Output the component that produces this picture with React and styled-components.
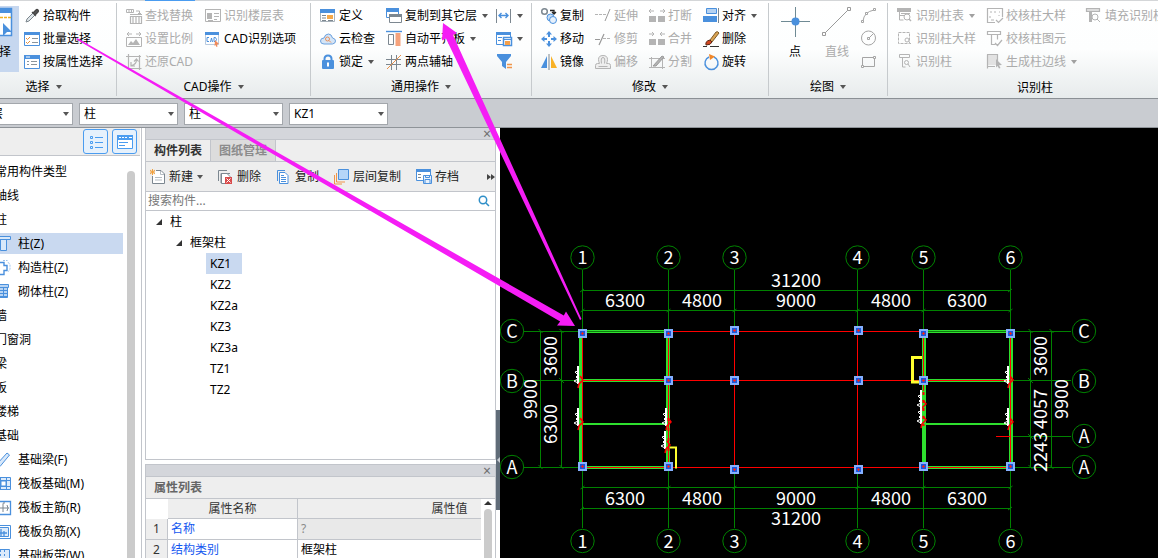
import { Fragment } from "react";
import styled, { createGlobalStyle } from "styled-components";

const BLUE = "#4a90dd";
const GREY = "#b4b4b4";
const STEEL = "#7c8790";

// ICONOS 16x16
const icons = {
  picker: (
    <>
      <path d="M2 14l1-3 6-6 2 2-6 6-3 1z" fill="#dfe6ea" stroke="#7b858c" />
      <path d="M8 4l4 4M9 5l3-3q1-1 2 0t0 2l-3 3z" stroke="#444" fill="#555" strokeWidth="1.3" />
    </>
  ),
  batch: (
    <>
      <path d="M.5 1.5h15v13H.5z" fill="#fff" stroke={BLUE} />
      <path d="M0 1h16v3H0z" fill={BLUE} />
      <path d="M2 7l1.500 1.500L6 6M2 11l1.500 1.500L6 10" stroke="#e8903a" />
      <path d="M8 7.500h6M8 11.500h6" stroke="#8a949c" />
    </>
  ),
  attribute: (
    <>
      <path d="M.5 1.5h15v13H.5z" fill="#fff" stroke={BLUE} />
      <path d="M0 1h16v4H0z" fill={BLUE} />
      <path d="M2 3h4" stroke="#fff" />
      <path d="M3 7.500h2M7 7.500h6M3 10.500h2M7 10.500h6" stroke="#8a949c" />
    </>
  ),
  find: (
    <>
      <path d="M.5 1.500h7v3h-7zM3 1.500v3M5.500 1.500v3M10 3h3.500v3M12 5l1.500 1.500L15 5" stroke={GREY} />
      <path d="M4.500 8.500h11v7h-11zM4 6.500h12M7 9v6M10 9v6M13 9v6" stroke={GREY} strokeWidth="1.2" />
    </>
  ),
  scale: (
    <>
      <path d="M1 3h5M3 1L1 3l2 2M10 3h5M13 1l2 2-2 2M.5 6.500h15v9H.5z" stroke={GREY} />
      <path d="M2 14l3-4 2 2 3-4 4 6z" fill={GREY} />
    </>
  ),
  restore: (
    <path d="M0 2.500h15M2.500 0v14.500h13M13.500 1v15M5 8v4h4M5.500 11.500q5-1 5-6M8 7.500l2.500-2.500 2 2.500" stroke={GREY} strokeWidth="1.2" />
  ),
  floors: (
    <>
      <path d="M.5 1.500h15v12H.5z" stroke={GREY} />
      <path d="M2 5h5v6H2z" fill={GREY} />
      <path d="M0 1.500h16M9 5.500h5M9 8.500h5M9 11.500h3M3 12.500h5" stroke={GREY} />
    </>
  ),
  cadOption: (
    <>
      <path d="M.5 2.500h13v11H.5z" fill="#fff" stroke="#b9cbe0" />
      <path d="M0 1h14v3H0z" fill={BLUE} />
      <path d="M4 6.500H2v4h2M5.500 11l1-4 1 4M9 6.500v4h1.500l1-2-1-2z" stroke={BLUE} />
      <path d="M10 9l4 4-2 .5.5 2-1 .5-1-2-1 1z" fill="#f08a5a" />
    </>
  ),
  define: (
    <>
      <path d="M.5 1.500h14v12H.5z" fill="#fff" stroke="#a9b3bb" />
      <path d="M0 1h15v4H0z" fill={BLUE} />
      <path d="M2 7.500h4M2 10h4M2 12.500h4M8 12.500h5" stroke={STEEL} />
      <path d="M7 7h6v4H7z" fill="#f5a94a" />
    </>
  ),
  cloud: (
    <>
      <path d="M4 13q-3.500 0-3.500-3T4 7q1-4 4.500-4 3 0 4 4 3 .5 3 3t-3 3z" fill="#d5e5f6" stroke="#6ba1de" />
      <circle cx="7.500" cy="8" r="2" stroke="#e8905a" />
      <path d="M9 9.500l2 2" stroke="#e8905a" />
    </>
  ),
  lock: (
    <>
      <path d="M4.500 7V5q0-3.500 3.500-3.500T11.500 5v2" stroke={BLUE} strokeWidth="2" />
      <rect x="2" y="6" width="12" height="9" rx="1" fill={BLUE} />
      <path d="M8 8.500v4" stroke="#fff" strokeWidth="2" />
    </>
  ),
  copyFloor: (
    <>
      <path d="M.5.500h12v9H.5z" fill="#fff" stroke={BLUE} />
      <path d="M0 0h13v4H0z" fill={BLUE} />
      <path d="M3.500 6.500h12v8h-12z" fill="#fff" stroke={STEEL} />
      <path d="M3 6h13v3H3z" fill={STEEL} />
    </>
  ),
  autoBoard: (
    <>
      <path d="M0 .5h16" stroke={BLUE} strokeWidth="1.400" />
      <path d="M2.500 3.500h5v10h-5z" stroke={STEEL} />
      <path d="M9.500 2h5v13h-5z" fill="#f5a27c" />
    </>
  ),
  axis: (
    <>
      <path d="M0 5.500h15M0 10.500h15M5.500 1v15M10.500 1v15" stroke={STEEL} />
      <path d="M1 15L15 1" stroke="#e8904a" />
    </>
  ),
  dimension: (
    <>
      <path d="M.5 1v14M14.500 1v14" stroke={STEEL} />
      <path d="M3 7.500h9M5.500 5L3 7.500 5.500 10M9.500 5L12 7.500 9.500 10" stroke={BLUE} strokeWidth="1.400" />
    </>
  ),
  saveView: (
    <>
      <path d="M.5 1.500h14v12H.5z" fill="#fff" stroke={BLUE} />
      <path d="M0 1h15v3H0z" fill={BLUE} />
      <path d="M2 6.500h4M2 9.500h3" stroke={BLUE} />
      <path d="M7.500 6.500h8v8h-8z" fill="#fff" stroke={BLUE} strokeWidth="1.500" />
      <path d="M8 8.500h7" stroke={BLUE} />
      <path d="M9 10h5v4H9z" fill="#f5a04a" />
    </>
  ),
  funnel: (
    <>
      <path d="M1 0h14v2l-5 6v7l-4-3V8L1 2z" fill={BLUE} />
      <path d="M11 10.500h5M11 13.500h5" stroke="#f0954a" strokeWidth="1.300" />
    </>
  ),
  copy: (
    <>
      <circle cx="3.500" cy="3.500" r="2.800" stroke={STEEL} strokeWidth="1.500" />
      <path d="M9 2.500h4V5M11 4l2 2 2-2" stroke="#222" strokeWidth="1.300" />
      <circle cx="9.500" cy="9.500" r="3.500" fill="#c8def5" stroke={BLUE} />
      <circle cx="12" cy="12" r="3.500" fill="#e6f0fb" stroke={BLUE} />
    </>
  ),
  move: (
    <path d="M8 0l3 3.500H9V6H7V3.500H5zM8 16l-3-3.500h2V10h2v2.500h2zM0 8l3.500-3v2H6v2H3.500v2zM16 8l-3.500 3V9H10V7h2.500V5z" fill={BLUE} />
  ),
  mirror: (
    <>
      <path d="M6 2v12H0z" fill={BLUE} />
      <path d="M10 2v12h6z" fill="#f8b125" />
      <path d="M8 0v16" stroke={STEEL} />
    </>
  ),
  extend: (
    <>
      <path d="M0 6.500h11" stroke={GREY} strokeDasharray="3 1" />
      <path d="M10 13l5-12" stroke="#999" />
    </>
  ),
  trim: (
    <>
      <path d="M0 8.500h5M4 14L9 3" stroke="#999" strokeWidth="1.200" />
      <path d="M8 7.500h8" stroke={GREY} strokeDasharray="3 1" />
    </>
  ),
  offset: (
    <path d="M.5 14.500v-3q0-2 2-2h2q-1-2-1-4 0-4 4.500-4t4.500 4q0 2-1 4h2q2 0 2 2v3zM3.500 12.500h9M6.500 9.500q-1-6 1.500-6t1.500 6" fill="#eee" stroke={GREY} />
  ),
  breakUp: (
    <>
      <path d="M0 8h7v6H0zM9 8h7v6H9z" fill={GREY} />
      <path d="M0 3h5M2 1L0 3l2 2M11 3h5M14 1l2 2-2 2" stroke={GREY} />
    </>
  ),
  merge: (
    <>
      <path d="M0 8h7v6H0zM9 8h7v6H9z" fill={GREY} />
      <path d="M0 3h5M3 1l2 2-2 2M11 3h5M13 1l-2 2 2 2" stroke={GREY} />
    </>
  ),
  split: (
    <>
      <path d="M0 4.500h16M2.500 3v10M13.500 5v10M0 13.500h16" stroke={GREY} />
      <path d="M4 12L13 2l2 1-8 9z" fill={GREY} stroke="#999" />
    </>
  ),
  align: (
    <>
      <path d="M3.500.500h10v5h-10z" fill="#b5d2f2" stroke={BLUE} />
      <path d="M0 8h14v6H0z" fill={BLUE} />
      <path d="M15.500 0v15" stroke={STEEL} />
    </>
  ),
  erase: (
    <>
      <path d="M7 9l6-8q2-1 3 1L9 11z" fill="#d9a352" stroke="#7c5a2a" />
      <path d="M3 14q-1-4 4-5l2 2q-1 3-6 3z" fill="#d2451e" stroke="#5a2a18" />
      <path d="M0 15.500h4M7 15.500h9" stroke="#333" />
    </>
  ),
  rotate: (
    <>
      <path d="M6 3a6.500 6.500 0 1 0 5 0" stroke={BLUE} strokeWidth="1.400" />
      <path d="M6 0l6 2.500L7 6z" fill="#f0872a" />
    </>
  ),
  arc: (
    <>
      <path d="M2 13Q3 4 13 2" stroke="#a4a4a4" />
      <path d="M.5 12.500h2v2h-2zM4.500 4.500h2v2h-2zM12.500.500h2v2h-2z" fill="#fff" stroke="#a4a4a4" />
    </>
  ),
  circle: (
    <>
      <circle cx="7.500" cy="7" r="7" stroke="#a4a4a4" />
      <path d="M8 7l4-4M6.500 6.500h2v2h-2z" stroke="#a4a4a4" />
    </>
  ),
  rect: (
    <>
      <path d="M1.500 3.500h12v9h-12z" stroke="#a4a4a4" />
      <path d="M.5 11.500h2v2h-2zM12.500 2.500h2v2h-2z" fill="#fff" stroke="#a4a4a4" />
    </>
  ),
  colTable: (
    <>
      <path d="M0 0h14v4H0z" fill={GREY} />
      <path d="M2.500 4v8h4M2 7.500h5M4 5.500h9" stroke={GREY} />
      <circle cx="10" cy="9" r="3" stroke={GREY} />
      <path d="M12 11l2 2" stroke={GREY} strokeWidth="1.500" />
    </>
  ),
  colDetail: (
    <>
      <path d="M1.500 1.500h11v11h-11z" stroke={GREY} strokeDasharray="3 1" />
      <circle cx="10" cy="9" r="2" stroke={GREY} />
      <path d="M11.500 10.500l2.500 2.500" stroke={GREY} />
    </>
  ),
  column: (
    <>
      <path d="M2.500.500h10v3h-10zM5.500 3.500v9.500h3" stroke={GREY} />
      <circle cx="9.500" cy="8.500" r="2" stroke={GREY} />
      <path d="M11 10l2 3" stroke={GREY} />
    </>
  ),
  checkDetail: (
    <>
      <path d="M8 14.500H.5V.5h15V9" stroke={GREY} strokeWidth="1.200" />
      <path d="M3 4h2M7 4h2M12 4h1M3 8v2M12 7v1M4 12h3" stroke={GREY} />
      <path d="M9 12l2.500 2.500L16 10" stroke={GREY} strokeWidth="1.200" />
    </>
  ),
  checkColumn: (
    <path d="M.5.500h13v3H.5zM4.500 3.500v10h4M10.500 3.500v5M8 12l2.500 2.500L15 9" stroke={GREY} strokeWidth="1.200" />
  ),
  edge: (
    <>
      <path d="M1 1h9v10H1z" fill="#e2e2e2" />
      <path d="M.5.500v14M0 .5h10.500V7M0 12.500h8" stroke={GREY} strokeWidth="1.200" />
      <path d="M9 5l6 6-3 .3 1.500 2.700-1.500.6L10.500 12 9 13.500z" fill={GREY} />
    </>
  ),
  fill: (
    <>
      <path d="M.5.500h13v3H.5z" fill="#ddd" stroke={GREY} strokeWidth="1.200" />
      <path d="M3 4h3v10H3z" fill={GREY} />
      <circle cx="9" cy="9" r="3" stroke={GREY} />
      <path d="M11 11l3 3" stroke={GREY} />
    </>
  ),
  create: (
    <>
      <path d="M6 1.500h5l3.500 3.500v9.500h-12V7" fill="#fff" stroke={STEEL} />
      <path d="M10.500 2v3.500H14M5 8.500h7M5 11h7" stroke="#b5bcc2" />
      <path d="M0 1l5 4M5 1L0 5M2.500 0v6M0 3h5" stroke="#f2a03c" />
    </>
  ),
  remove: (
    <>
      <path d="M.5 12V1.500H9M3 14V4.500h9" stroke={STEEL} />
      <path d="M3.500 4.500H9l3 3v7H3.500z" fill="#fff" stroke={STEEL} />
      <path d="M7 8h7v7H7z" fill="#d94b4b" />
      <path d="M8.500 9.500l4 4M12.500 9.500l-4 4" stroke="#fff" />
    </>
  ),
  pages: (
    <>
      <path d="M1.500 12V1.500H9" stroke={BLUE} />
      <path d="M3.500 3.500H9l3 3v8H3.500z" fill="#fff" stroke={BLUE} />
      <path d="M5 6.500h3M5 8.500h5M5 10.500h5M5 12.500h5" stroke={BLUE} />
    </>
  ),
  layerCopy: (
    <>
      <path d="M.5 6v9H8M2.500 4v9H11" stroke="#f0954a" />
      <path d="M4.500.500h10v10h-10z" fill="#b5d5f8" stroke={BLUE} />
    </>
  ),
  archive: (
    <>
      <path d="M.5.500h14v11H.5z" fill="#fff" stroke={BLUE} />
      <path d="M0 0h15v3H0z" fill={BLUE} />
      <path d="M2 5.500h3M2 8.500h3" stroke={STEEL} />
      <path d="M7.500 6.500h8v8h-8z" fill="#e7f1fc" stroke={BLUE} />
      <path d="M9 14v-3.500h5V14M9.500 7v1.500h4V7" stroke={BLUE} />
    </>
  ),
  typeColumn: (
    <path d="M1.500.500h14v3h-14zM5.500 3.500h6v11h-6z" fill="#d8e8fa" stroke={BLUE} />
  ),
  typeTie: (
    <>
      <path d="M8 .5h4q1 0 1 2 2 1 2 3v3q0 2-2 3" stroke="#9cc3ee" strokeDasharray="2 1" />
      <path d="M4 2.500h5v3h3v5H9v4H4v-3.500H2v-5h2z" fill="#fff" stroke={BLUE} strokeWidth="1.400" />
    </>
  ),
  typeBrick: (
    <>
      <path d="M1.500.500h12v3h-12zM4.500 3.500h8v10h-8z" fill="#b8d4f3" stroke={BLUE} />
      <path d="M5 6.500h7M5 9.500h7M5 12.500h7M8.500 4v10" stroke={BLUE} />
    </>
  ),
  typeBeam: <path d="M2 12L12 1l2.500 2L5 14.500H2z" fill="#d8e8fa" stroke={BLUE} />,
  typeRaft: (
    <>
      <path d="M.5 1.500h15v12H.5zM.5 4.500h15M.5 10.500h15M5.500 1v13M11.500 1v13" fill="#dcebfb" stroke={BLUE} />
      <path d="M6 5h5v5H6z" fill="#fff" stroke={BLUE} />
    </>
  ),
  typeMain: (
    <>
      <path d="M.5 1.500h15v13H.5z" fill="#fff" stroke={BLUE} strokeWidth="1.300" />
      <path d="M2 8h12M12 5q2 3 0 6M8 12V4q0-2 2-1" stroke={STEEL} />
    </>
  ),
  typeNeg: (
    <>
      <path d="M1 1.500h14.500v13H1z" fill="#fff" stroke={BLUE} />
      <path d="M1 3.500h12.500v9H1z" fill="#dcebfb" stroke={BLUE} />
      <path d="M3 9h9M6 5v7M9 7v5" stroke={BLUE} strokeWidth="1.300" />
    </>
  ),
  typeBand: (
    <>
      <path d="M.5 1.500h14v13H.5z" fill="#dcebfb" stroke={BLUE} />
      <path d="M5.500 2v12M9.500 2v12" stroke={BLUE} strokeDasharray="2 2" />
    </>
  ),
};

const IconSvg = styled.svg`
  flex: none;
  width: 16px;
  height: 16px;
  fill: none;
  overflow: visible;
`;

const Icon = ({ name }) => (
  <IconSvg viewBox="0 0 16 16" aria-hidden="true">
    {icons[name]}
  </IconSvg>
);

// BOTONES DE LA CINTA
const ribbon = [
  {
    title: "选择",
    width: 146,
    columns: [
      {
        width: 92,
        items: [
          { icon: "picker", text: "拾取构件" },
          { icon: "batch", text: "批量选择" },
          { icon: "attribute", text: "按属性选择" },
        ],
      },
    ],
  },
  {
    title: "CAD操作",
    width: 194,
    columns: [
      {
        width: 79,
        items: [
          { icon: "find", text: "查找替换", off: true },
          { icon: "scale", text: "设置比例", off: true },
          { icon: "restore", text: "还原CAD", off: true },
        ],
      },
      {
        width: 96,
        items: [
          { icon: "floors", text: "识别楼层表", off: true },
          { icon: "cadOption", text: "CAD识别选项" },
        ],
      },
    ],
  },
  {
    title: "通用操作",
    width: 221,
    columns: [
      {
        width: 66,
        items: [
          { icon: "define", text: "定义" },
          { icon: "cloud", text: "云检查" },
          { icon: "lock", text: "锁定", arrow: true },
        ],
      },
      {
        width: 110,
        items: [
          { icon: "copyFloor", text: "复制到其它层", arrow: true },
          { icon: "autoBoard", text: "自动平齐板", arrow: true },
          { icon: "axis", text: "两点辅轴" },
        ],
      },
      {
        width: 28,
        items: [
          { icon: "dimension", label: "标注", arrow: true },
          { icon: "saveView", label: "保存", arrow: true },
          { icon: "funnel", label: "过滤" },
        ],
      },
    ],
  },
  {
    title: "修改",
    width: 237,
    columns: [
      {
        width: 54,
        items: [
          { icon: "copy", text: "复制" },
          { icon: "move", text: "移动" },
          { icon: "mirror", text: "镜像" },
        ],
      },
      {
        width: 54,
        items: [
          { icon: "extend", text: "延伸", off: true },
          { icon: "trim", text: "修剪", off: true },
          { icon: "offset", text: "偏移", off: true },
        ],
      },
      {
        width: 54,
        items: [
          { icon: "breakUp", text: "打断", off: true },
          { icon: "merge", text: "合并", off: true },
          { icon: "split", text: "分割", off: true },
        ],
      },
      {
        width: 60,
        items: [
          { icon: "align", text: "对齐", arrow: true },
          { icon: "erase", text: "删除" },
          { icon: "rotate", text: "旋转" },
        ],
      },
    ],
  },
  {
    title: "绘图",
    width: 119,
    columns: [
      {
        width: 20,
        items: [
          { icon: "arc", label: "弧", off: true },
          { icon: "circle", label: "圆", off: true },
          { icon: "rect", label: "矩形", off: true },
        ],
      },
    ],
  },
  {
    title: "识别柱",
    width: 294,
    plain: true,
    columns: [
      {
        width: 90,
        items: [
          { icon: "colTable", text: "识别柱表", off: true, arrow: true },
          { icon: "colDetail", text: "识别柱大样", off: true },
          { icon: "column", text: "识别柱", off: true },
        ],
      },
      {
        width: 99,
        items: [
          { icon: "checkDetail", text: "校核柱大样", off: true },
          { icon: "checkColumn", text: "校核柱图元", off: true },
          { icon: "edge", text: "生成柱边线", off: true, arrow: true },
        ],
      },
      { width: 90, items: [{ icon: "fill", text: "填充识别柱", off: true }] },
    ],
  },
];

const combos = [
  { label: "楼层", value: "首层" },
  { label: "构件类型", value: "柱" },
  { label: "构件", value: "柱" },
  { label: "构件名称", value: "KZ1" },
];

const types = [
  { text: "常用构件类型" },
  { text: "轴线" },
  { text: "柱" },
  { text: "柱(Z)", icon: "typeColumn", active: true },
  { text: "构造柱(Z)", icon: "typeTie" },
  { text: "砌体柱(Z)", icon: "typeBrick" },
  { text: "墙" },
  { text: "门窗洞" },
  { text: "梁" },
  { text: "板" },
  { text: "楼梯" },
  { text: "基础" },
  { text: "基础梁(F)", icon: "typeBeam" },
  { text: "筏板基础(M)", icon: "typeRaft" },
  { text: "筏板主筋(R)", icon: "typeMain" },
  { text: "筏板负筋(X)", icon: "typeNeg" },
  { text: "基础板带(W)", icon: "typeBand" },
];

const members = ["KZ1", "KZ2", "KZ2a", "KZ3", "KZ3a", "TZ1", "TZ2"];

const tools = [
  { icon: "create", text: "新建", arrow: true },
  { icon: "remove", text: "删除" },
  { icon: "pages", text: "复制" },
  { icon: "layerCopy", text: "层间复制" },
  { icon: "archive", text: "存档" },
];

const Arrow = () => (
  <ArrowSvg viewBox="0 0 6 4" aria-hidden="true">
    <path d="M0 0h6L3 4z" />
  </ArrowSvg>
);

const RibbonGroup = ({ group }) => (
  <Group $width={group.width}>
    <GroupBody>
      {group.title === "选择" && (
        <BigButton $active $width={40}>
          <BigIcon viewBox="0 0 30 30">
            <path d="M2.500 1.500h25v27h-25z" fill="#fff" stroke={BLUE} strokeWidth="1.500" />
            <path d="M2 1h26v5H2z" fill={BLUE} />
            <path d="M4 10.500h23" stroke="#f0b020" strokeWidth="1.500" strokeDasharray="3 1" />
            <path d="M19 16l9 9h-5l-4 4z" fill={BLUE} />
          </BigIcon>
          选择
        </BigButton>
      )}
      {group.title === "绘图" && (
        <>
          <BigButton $width={42}>
            <BigIcon viewBox="0 0 30 30">
              <path d="M15.500 0v30M1 14.500h29" stroke="#6f8a94" />
              <circle cx="15.500" cy="14.500" r="4" fill={BLUE} />
            </BigIcon>
            点
          </BigButton>
          <BigButton $width={42} disabled>
            <BigIcon viewBox="0 0 30 30">
              <path d="M2 27L27 2" stroke="#9a9a9a" />
              <path d="M.5 25.500h3v3h-3zM25.500.500h3v3h-3z" fill="#fff" stroke="#9a9a9a" />
            </BigIcon>
            直线
          </BigButton>
        </>
      )}
      {group.columns.map((column) => (
        <Column key={column.items[0].icon} $width={column.width}>
          {column.items.map((item) => (
            <ToolButton key={item.icon} disabled={item.off} aria-label={item.label}>
              <Icon name={item.icon} />
              {item.text}
              {item.arrow && <Arrow />}
            </ToolButton>
          ))}
        </Column>
      ))}
    </GroupBody>
    <GroupTitle $plain={group.plain}>
      {group.title}
      {!group.plain && <Arrow />}
    </GroupTitle>
  </Group>
);

// PLANO
const axes = [582.5, 668.5, 734.5, 857.5, 923.5, 1010.5];
const spans = [
  [625, "6300"],
  [702, "4800"],
  [796, "9000"],
  [891, "4800"],
  [967, "6300"],
];
const rows = [
  [512, 331, "C"],
  [512, 381, "B"],
  [512, 467, "A"],
  [1084, 331, "C"],
  [1084, 381, "B"],
  [1084, 436, "A"],
  [1084, 467, "A"],
];
const sideDims = [
  [551, 356, "3600"],
  [551, 424, "6300"],
  [531, 399, "9900"],
  [1041, 356, "3600"],
  [1041, 409, "4057"],
  [1041, 452, "2243"],
  [1062, 399, "9900"],
];
const nodes = [
  [582, 333],
  [668, 333],
  [734, 330],
  [858, 330],
  [923, 333],
  [1010, 333],
  [668, 380],
  [734, 380],
  [858, 380],
  [923, 380],
  [582, 466],
  [668, 466],
  [734, 469],
  [858, 469],
  [923, 466],
  [1010, 466],
];
const marks = [
  [578, 366],
  [578, 408],
  [666, 408],
  [665, 431],
  [921, 390],
  [921, 406],
  [1008, 366],
  [1008, 408],
];

const Drawing = () => (
  <Plan viewBox="500 128 658 430" role="img" aria-label="柱平面图">
    <g stroke="#008200">
      {axes.map((x) => (
        <path key={x} d={`M${x} 270V331M${x} 467V528`} />
      ))}
      <path d="M582 290.500h428M582 310.500h428M582 487.500h428M582 508.500h428" />
      <path d="M540.500 331v136M561.500 331v136M1030.500 331v136M1051.500 331v136" />
      <path d="M524 331.500h58M524 380.500h58M524 467.500h58M1010 331.500h61M1010 380.500h61M1010 436.500h61M1010 467.500h61" />
      {axes.map((x) => (
        <path key={x} d={`M${x - 2} 312l4-3M${x - 2} 489l4-3`} />
      ))}
      <path d="M580 292l4-3M580 510l4-3M1008 292l4-3M1008 510l4-3" />
      {[540.5, 561.5, 1030.5, 1051.5].map((x) => (
        <path key={x} d={`M${x - 2} 329l4 4M${x - 2} 465l4 4`} />
      ))}
      <path d="M559 378l5 5M1028 378l5 5M1028 434l5 5" />
      {axes.map((x) => (
        <Fragment key={x}>
          <circle cx={x} cy="257.500" r="11.700" />
          <circle cx={x} cy="541" r="11.700" />
        </Fragment>
      ))}
      {rows.map(([x, y]) => (
        <circle key={`${x}-${y}`} cx={x} cy={y} r="11.700" />
      ))}
    </g>

    <g stroke="#2ee02e">
      <path d="M582 331.500h86M923 331.500h87" stroke="#0d7a0d" />
      <path d="M582 330.500h86M582 332.500h86M923 330.500h87M923 332.500h87" />
      <path d="M582 380.500h86M923 380.500h87M582 467.500h86M923 467.500h87" strokeWidth="3" />
      <path d="M582 424h86M923 424h87" strokeWidth="2" />
      <path d="M580.500 331v136" strokeWidth="3" />
      <path d="M668 331v136M924 331v136M1011 331v136" strokeWidth="4" />
    </g>
    <g stroke="#f00">
      <path d="M668 331.500h256M582 380.500h429M582 467.500h429M996 436.500h14" />
      <path d="M582.500 331v136M668.500 331v136M734.500 331v136M857.500 331v136M923.500 331v60M1010.500 331v136" />
      <path d="M923.500 392v34" strokeWidth="2" strokeDasharray="3 5" />
      <path d="M668.500 418v38" strokeWidth="2" strokeDasharray="3 7" />
    </g>
    <g stroke="#ffff2e" strokeWidth="3">
      <path d="M922 357.500h-9.500v24.500h9" />
      <path d="M670 447.500h6v21" strokeWidth="2" />
    </g>
    {marks.map(([x, y]) => (
      <g key={`${x}-${y}`}>
        <path d={`M${x} ${y}v18`} stroke="#fff" strokeWidth="2" />
        <path d={`M${x} ${y + 5}l-3 1 3 3-2 2 2 2-4 2 4 2`} stroke="#fff" />
        <path d={`M${x + 2} ${y + 10}l3 4-4 4-1 4`} stroke="#f00" strokeWidth="1.500" />
      </g>
    ))}
    {nodes.map(([x, y]) => (
      <g key={`${x}-${y}`}>
        <path d={`M${x - 3} ${y - 3}h7v7h-7z`} fill="#1f56d8" stroke="#85b0ff" strokeWidth="2" />
        <path d={`M${x - 1} ${y + 0.5}h3M${x + 0.5} ${y - 1}v3`} stroke="#e02828" />
      </g>
    ))}

    {axes.map((x, i) => (
      <Fragment key={x}>
        <PlanText x={x} y="264">{i + 1}</PlanText>
        <PlanText x={x} y="548">{i + 1}</PlanText>
      </Fragment>
    ))}
    {rows.map(([x, y, letter]) => (
      <PlanText key={`${x}-${y}`} x={x} y={y + 7}>
        {letter}
      </PlanText>
    ))}
    {spans.map(([x, value]) => (
      <Fragment key={x}>
        <PlanText x={x} y="307">{value}</PlanText>
        <PlanText x={x} y="505">{value}</PlanText>
      </Fragment>
    ))}
    <PlanText x="796" y="287">31200</PlanText>
    <PlanText x="796" y="525">31200</PlanText>
    {sideDims.map(([x, y, value]) => (
      <PlanText key={`${x}-${y}`} transform={`translate(${x + 6} ${y}) rotate(-90)`}>
        {value}
      </PlanText>
    ))}
  </Plan>
);

const App = () => {
  return (
    <>
      <GlobalStyle />
      <Window>
        <TabStrip>
          <TabMark />
        </TabStrip>
        <Ribbon>
          {ribbon.map((group) => (
            <RibbonGroup key={group.title} group={group} />
          ))}
        </Ribbon>

        <ComboBar>
          {combos.map((combo) => (
            <Combo key={combo.label}>
              <select aria-label={combo.label} defaultValue={combo.value}>
                <option>{combo.value}</option>
              </select>
              <Arrow />
            </Combo>
          ))}
        </ComboBar>

        <Main>
          <TypePanel>
            <TypeHeader>
              <ViewButton aria-label="列表">
                <svg viewBox="0 0 18 18">
                  <path d="M3.500 3.500h2v2h-2zM3.500 8.500h2v2h-2zM3.500 13.500h2v2h-2zM8 4.500h8M8 9.500h8M8 14.500h8" stroke="#4a9cf0" fill="none" />
                </svg>
              </ViewButton>
              <ViewButton aria-label="面板">
                <svg viewBox="0 0 18 18">
                  <path d="M1.500 2.500h15v13h-15z" fill="#fff" stroke="#4a9cf0" />
                  <path d="M1 2h16v5H1z" fill="#4a9cf0" />
                  <path d="M3 4.500h2M6 4.500h2M9 4.500h2M13 4.500h3" stroke="#fff" />
                  <path d="M3 9.500h9M3 12.500h6" stroke="#4a9cf0" />
                </svg>
              </ViewButton>
            </TypeHeader>
            <TypeBody>
              <TypeList>
                {types.map((type) => (
                  <TypeRow key={type.text} $active={type.active}>
                    {type.icon && <Icon name={type.icon} />}
                    {type.text}
                  </TypeRow>
                ))}
              </TypeList>
              <TypeScroll />
            </TypeBody>
          </TypePanel>

          <Docks>
            <ListDock>
              <DockTitle>
                <CloseButton aria-label="关闭">×</CloseButton>
              </DockTitle>
              <Tabs>
                <Tab $active>构件列表</Tab>
                <Tab>图纸管理</Tab>
              </Tabs>
              <Toolbar>
                {tools.map((tool) => (
                  <ToolButton key={tool.icon}>
                    <Icon name={tool.icon} />
                    {tool.text}
                    {tool.arrow && <Arrow />}
                  </ToolButton>
                ))}
                <MoreButton aria-label="更多">
                  <svg viewBox="0 0 8 6">
                    <path d="M0 0l4 3-4 3zM4 0l4 3-4 3z" />
                  </svg>
                </MoreButton>
              </Toolbar>
              <Search>
                <input type="text" placeholder="搜索构件..." aria-label="搜索构件" />
                <svg viewBox="0 0 12 12">
                  <circle cx="5" cy="5" r="3.700" />
                  <path d="M8 8l3 3" />
                </svg>
              </Search>
              <Tree>
                <TreeRow $level={0}>
                  <Expand viewBox="0 0 6 6">
                    <path d="M6 0v6H0z" />
                  </Expand>
                  <span>柱</span>
                </TreeRow>
                <TreeRow $level={1}>
                  <Expand viewBox="0 0 6 6">
                    <path d="M6 0v6H0z" />
                  </Expand>
                  <span>框架柱</span>
                </TreeRow>
                {members.map((member, i) => (
                  <TreeRow key={member} $level={2}>
                    <TreeLeaf $active={i === 0}>{member}</TreeLeaf>
                  </TreeRow>
                ))}
              </Tree>
            </ListDock>

            <PropertyDock>
              <DockTitle>
                <CloseButton aria-label="关闭">×</CloseButton>
              </DockTitle>
              <PropertyTitle>属性列表</PropertyTitle>
              <PropertyBody>
                <TableClip>
                  <PropertyTable>
                    <colgroup>
                      <col width="22" />
                      <col width="130" />
                      <col width="304" />
                    </colgroup>
                    <thead>
                      <tr>
                        <td />
                        <th>属性名称</th>
                        <th>属性值</th>
                      </tr>
                    </thead>
                    <tbody>
                      <tr>
                        <IndexCell>1</IndexCell>
                        <NameCell>名称</NameCell>
                        <ValueCell $locked>?</ValueCell>
                      </tr>
                      <tr>
                        <IndexCell>2</IndexCell>
                        <NameCell>结构类别</NameCell>
                        <ValueCell>框架柱</ValueCell>
                      </tr>
                    </tbody>
                  </PropertyTable>
                </TableClip>
                <PropertyScroll>
                  <svg viewBox="0 0 8 4">
                    <path d="M4 0l4 4H0z" />
                  </svg>
                  <span />
                </PropertyScroll>
              </PropertyBody>
            </PropertyDock>
          </Docks>

          <Splitter>
            <SplitHandle aria-label="折叠面板">
              <svg viewBox="0 0 4 6">
                <path d="M4 0v6L1 3z" fill="#c9ced4" />
              </svg>
            </SplitHandle>
          </Splitter>
          <Canvas>
            <Drawing />
          </Canvas>
        </Main>

        <Annotations viewBox="0 0 1158 558" aria-hidden="true">
          <path d="M77 38L563.800 315.500 566 311.500 575 326 557 325.500 560.200 321.500 76.500 39.500z" />
          <path d="M581.500 319L453 35 457 33 443 23 442 40.500 446 38.500 580 320z" />
        </Annotations>
      </Window>
    </>
  );
};

const GlobalStyle = createGlobalStyle`
  * {
    box-sizing: border-box;
  }
  body {
    margin: 0;
    overflow: hidden;
    font-family: "Noto Sans", "Noto Sans CJK SC", sans-serif;
    font-size: 12px;
    line-height: 18px;
    color: #000;
  }
  button, input, select {
    font: inherit;
    color: inherit;
  }
  button {
    border: 0;
    padding: 0;
    background: none;
    white-space: nowrap;
  }
`;

const Window = styled.div`
  position: relative;
  display: flex;
  flex-direction: column;
  height: 100vh;
  overflow: hidden;
`;

// CINTA
const TabStrip = styled.div`
  flex: none;
  height: 1px;
  padding-left: 145px;
  background: #d4d6d8;
`;

const TabMark = styled.div`
  width: 50px;
  height: 1px;
  background: #4a9cf0;
`;

const Ribbon = styled.div`
  flex: none;
  display: flex;
  height: 98px;
  margin-left: -29px;
  border-bottom: 1px solid #8b9095;
  background: linear-gradient(#fff 0%, #fdfefe 50%, #e7ebec 100%);
`;

const Group = styled.section`
  flex: none;
  width: ${(p) => p.$width}px;
  display: flex;
  flex-direction: column;
  margin: 2px 0;
  border-right: 1px solid #c6cacd;
  &:last-child {
    border-right: 0;
  }
`;

const GroupBody = styled.div`
  display: flex;
  height: 71px;
  padding: 1px 0 0 9px;
`;

const GroupTitle = styled.div`
  display: flex;
  align-items: center;
  justify-content: center;
  gap: 4px;
  padding-top: ${(p) => (p.$plain ? "6px" : "4px")};
`;

const Column = styled.div`
  flex: none;
  width: ${(p) => p.$width}px;
  display: flex;
  flex-direction: column;
  align-items: flex-start;
`;

const ArrowSvg = styled.svg`
  flex: none;
  width: 6px;
  height: 4px;
  margin-left: 2px;
  fill: #555;
`;

const ToolButton = styled.button`
  display: flex;
  align-items: center;
  gap: 3px;
  height: 23px;
  &:disabled {
    color: #ababab;
  }
  &:disabled ${ArrowSvg} {
    fill: #a0a0a0;
  }
`;

const BigButton = styled.button`
  flex: none;
  width: ${(p) => p.$width}px;
  height: 66px;
  display: flex;
  flex-direction: column;
  align-items: center;
  gap: 6px;
  margin: ${(p) => (p.$active ? "2px 5px 0 -1px" : "2px 0 0 -4px")};
  background: ${(p) => (p.$active ? "#c6d7ef" : "none")};
  &:disabled {
    color: #ababab;
  }
  & + & {
    margin-left: 0;
    margin-right: 3px;
  }
`;

const BigIcon = styled.svg`
  width: 30px;
  height: 30px;
  margin-top: 1px;
  fill: none;
`;

// BARRA DE SELECTORES
const ComboBar = styled.div`
  flex: none;
  display: flex;
  align-items: center;
  gap: 6px;
  height: 29px;
  padding-top: 1px;
  margin-left: -26px;
  border-bottom: 1px solid #8e9398;
  background: #c9ccd1;
`;

const Combo = styled.div`
  position: relative;
  width: 99px;
  select {
    display: block;
    width: 100%;
    height: 22px;
    padding: 0 4px;
    appearance: none;
    border: 1px solid #a3a7ac;
    border-radius: 0;
    background: #fff;
  }
  ${ArrowSvg} {
    position: absolute;
    right: 4px;
    top: 9px;
  }
`;

const Main = styled.main`
  flex: 1;
  min-height: 0;
  display: flex;
`;

// TIPOS DE COMPONENTE
const TypePanel = styled.aside`
  flex: none;
  width: 142px;
  display: flex;
  flex-direction: column;
  border-right: 1px solid #c2c5cb;
  overflow: hidden;
`;

const TypeHeader = styled.div`
  flex: none;
  display: flex;
  align-items: center;
  justify-content: flex-end;
  gap: 4px;
  height: 28px;
  padding-right: 3px;
  margin-right: 1px;
  border-bottom: 1px solid #c2c5cb;
  background: #eee;
`;

const ViewButton = styled.button`
  width: 25px;
  height: 25px;
  display: grid;
  place-items: center;
  border: 1px solid #4a9cf0;
  border-radius: 3px;
  background: #e6f1fc;
  svg {
    width: 18px;
    height: 18px;
  }
`;

const TypeBody = styled.div`
  flex: 1;
  min-height: 0;
  display: flex;
`;

const TypeList = styled.ul`
  flex: 1;
  min-width: 0;
  display: flex;
  flex-direction: column;
  gap: 3px;
  margin: 0 4px 0 -5px;
  padding: 5px 0 0;
  list-style: none;
`;

const TypeRow = styled.li`
  flex: none;
  display: flex;
  align-items: center;
  gap: 7px;
  height: 21px;
  white-space: nowrap;
  background: ${(p) => (p.$active ? "#c9d9f0" : "none")};
`;

const TypeScroll = styled.div`
  width: 8px;
  margin: 15px 6px 0 0;
  border-radius: 4px 4px 0 0;
  background: #cbcbcb;
`;

// PANELES
const Docks = styled.div`
  flex: none;
  width: 354px;
  display: flex;
  flex-direction: column;
  gap: 4px;
  padding-left: 3px;
`;

const ListDock = styled.section`
  flex: none;
  height: 332px;
  border: 1px solid #c2c5cb;
  border-top: 0;
`;

const DockTitle = styled.div`
  flex: none;
  display: flex;
  justify-content: flex-end;
  height: 12px;
  padding-right: 4px;
  border-bottom: 1px solid #c2c5cb;
  background: #d4d6db;
`;

const CloseButton = styled.button`
  color: #6e6e6e;
  font-size: 14px;
  line-height: 12px;
`;

const Tabs = styled.div`
  display: flex;
  height: 22px;
  border-bottom: 1px solid #c2c5cb;
  background: #eee;
`;

const Tab = styled.button`
  padding: 0 8px;
  border-right: 1px solid #c2c5cb;
  font-weight: 700;
  color: ${(p) => (p.$active ? "#333" : "#8b8b8b")};
  background: ${(p) => (p.$active ? "#eee" : "#dcdcdc")};
`;

const Toolbar = styled.div`
  display: flex;
  align-items: center;
  gap: 15px;
  height: 30px;
  padding-left: 4px;
  border-bottom: 1px solid #c2c5cb;
  background: #eee;
  color: #222;
  ${ArrowSvg} {
    margin-left: 1px;
  }
`;

const MoreButton = styled.button`
  margin-left: auto;
  svg {
    display: block;
    width: 8px;
    height: 6px;
    fill: #444;
  }
`;

const Search = styled.label`
  display: flex;
  align-items: center;
  height: 19px;
  padding: 0 5px 0 2px;
  border-bottom: 1px solid #c2c5cb;
  input {
    flex: 1;
    min-width: 0;
    height: 18px;
    padding: 0;
    border: 0;
    outline: 0;
    background: none;
  }
  input::placeholder {
    color: #777;
    opacity: 1;
  }
  svg {
    width: 12px;
    height: 12px;
    fill: none;
    stroke: #2f8fc8;
    stroke-width: 1.5;
  }
`;

const Tree = styled.ul`
  margin: 0;
  padding: 0;
  list-style: none;
`;

const TreeRow = styled.li`
  display: flex;
  align-items: center;
  gap: 8px;
  height: 21px;
  padding-left: ${(p) => 10 + p.$level * 20}px;
  ${(p) => p.$level === 2 && "padding-left: 60px;"}
`;

const Expand = styled.svg`
  width: 6px;
  height: 6px;
  fill: #333;
`;

const TreeLeaf = styled.span`
  padding: 0 11px 0 4px;
  line-height: 21px;
  background: ${(p) => (p.$active ? "#c9d9f0" : "none")};
`;

const PropertyDock = styled.section`
  flex: 1;
  min-height: 0;
  display: flex;
  flex-direction: column;
  overflow: hidden;
  border: 1px solid #c2c5cb;
  border-bottom: 0;
`;

const PropertyTitle = styled.h2`
  flex: none;
  height: 22px;
  margin: 0;
  padding-left: 8px;
  border-bottom: 1px solid #c2c5cb;
  background: #eee;
  color: #666;
  font-size: 12px;
  font-weight: 700;
  line-height: 21px;
`;

const PropertyBody = styled.div`
  flex: 1;
  min-height: 0;
  display: flex;
`;

const TableClip = styled.div`
  flex: 1;
  min-width: 0;
  overflow: hidden;
`;

const PropertyTable = styled.table`
  width: 456px;
  table-layout: fixed;
  border-collapse: separate;
  border-spacing: 0;
  th {
    height: 20px;
    padding: 0;
    border-right: 1px solid #c2c5cb;
    border-bottom: 1px solid #c2c5cb;
    background: #eee;
    color: #333;
    font-weight: 400;
  }
`;

const Cell = styled.td`
  height: 21px;
  padding: 0 3px;
  border-right: 1px solid #c2c5cb;
  border-bottom: 1px solid #c2c5cb;
`;

const IndexCell = styled(Cell)`
  background: #eee;
  color: #333;
  text-align: center;
`;

const NameCell = styled(Cell)`
  color: #1458f0;
`;

const ValueCell = styled(Cell)`
  background: ${(p) => (p.$locked ? "#e9e9e9" : "#fff")};
  color: ${(p) => (p.$locked ? "#8b8b8b" : "#000")};
`;

const PropertyScroll = styled.div`
  flex: none;
  width: 14px;
  display: flex;
  flex-direction: column;
  align-items: center;
  gap: 4px;
  padding-top: 2px;
  svg {
    flex: none;
    width: 8px;
    height: 4px;
    fill: #333;
  }
  span {
    flex: 1;
    width: 8px;
    border-radius: 4px 4px 0 0;
    background: #cbcbcb;
  }
`;

// LIENZO
const Splitter = styled.div`
  flex: none;
  width: 4px;
  padding-top: 282px;
  background: #fff;
`;

const SplitHandle = styled.button`
  display: grid;
  place-items: center;
  width: 4px;
  height: 100px;
  background: #606c78;
  svg {
    width: 4px;
    height: 6px;
  }
`;

const Canvas = styled.div`
  flex: 1;
  min-width: 0;
  overflow: hidden;
  background: #000;
`;

const Plan = styled.svg`
  display: block;
  width: 658px;
  height: 430px;
  fill: none;
`;

const PlanText = styled.text`
  fill: #fff;
  font-family: "Noto Sans CJK SC", sans-serif;
  font-size: 18px;
  text-anchor: middle;
`;

const Annotations = styled.svg`
  position: absolute;
  left: 0;
  top: 0;
  width: 1158px;
  height: 558px;
  fill: #f51df5;
  pointer-events: none;
`;

export default App;
